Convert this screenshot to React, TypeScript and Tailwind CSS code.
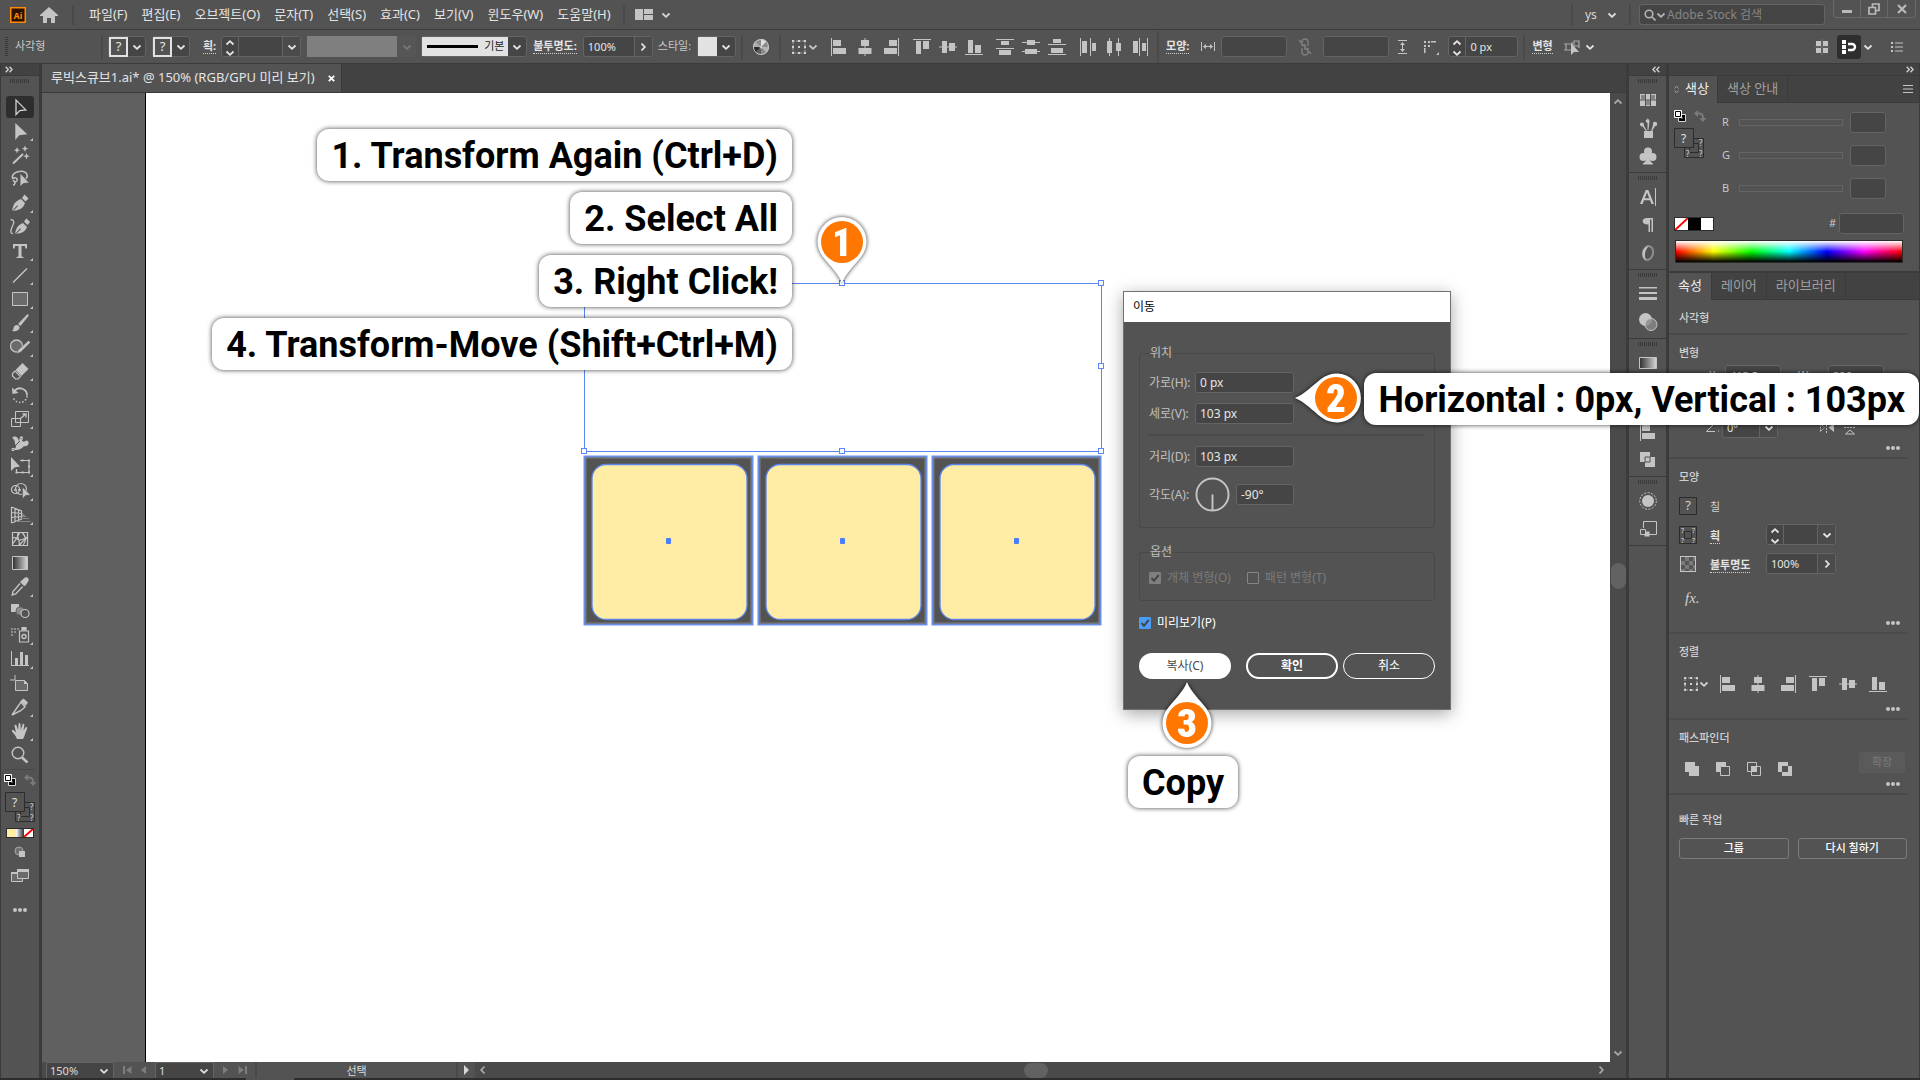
import type { ReactNode } from 'react'
import clsx from 'clsx'

const menus = ['파일(F)', '편집(E)', '오브젝트(O)', '문자(T)', '선택(S)', '효과(C)', '보기(V)', '윈도우(W)', '도움말(H)']

const field = 'h-[21px] min-w-0 rounded-[3px] border border-[#646464] bg-[#454545] text-[#e6e6e6] outline-none'

/* ---------- small glyphs ---------- */

function Chevron({ dir = 'down', className }: { dir?: 'down' | 'up' | 'left' | 'right'; className?: string }) {
  const d = {
    down: 'M1.5 3.5 5 6.8 8.5 3.5',
    up: 'M1.5 6.5 5 3.2 8.5 6.5',
    left: 'M6.5 1.5 3.2 5 6.5 8.5',
    right: 'M3.5 1.5 6.8 5 3.5 8.5',
  }[dir]
  return (
    <svg viewBox="0 0 10 10" className={clsx('size-[10px] shrink-0', className)} fill="none" stroke="currentColor" strokeWidth="1.8">
      <path d={d} />
    </svg>
  )
}

function DoubleChevron({ left }: { left?: boolean }) {
  return (
    <svg viewBox="0 0 8 7" className="h-[7px] w-2" fill="none" stroke="#cfcfcf" strokeWidth="1.4">
      {left ? <path d="M3.5.8.9 3.5l2.6 2.7M7.3.8 4.7 3.5l2.6 2.7" /> : <path d="M.7.8l2.6 2.7L.7 6.2M4.5.8l2.6 2.7-2.6 2.7" />}
    </svg>
  )
}

function Grip() {
  return (
    <div className="flex h-[10px] items-center justify-center">
      <div className="h-1 w-5 bg-[repeating-linear-gradient(to_right,#3a3a3a_0_1px,transparent_1px_2px)]" />
    </div>
  )
}

function Separator({ className }: { className?: string }) {
  return <div className={clsx('w-[2px] shrink-0 bg-[#494949]', className ?? 'h-6')} />
}

function Stepper() {
  return (
    <span className="flex h-full w-[17px] shrink-0 flex-col items-center justify-between border-r border-[#646464] py-px text-[#e6e6e6]">
      <button aria-label="증가" className="leading-none">
        <Chevron dir="up" className="size-[9px]" />
      </button>
      <button aria-label="감소" className="leading-none">
        <Chevron className="size-[9px]" />
      </button>
    </span>
  )
}

function Combo({ label, value = '', stepper, arrow, className }: { label: string; value?: string; stepper?: boolean; arrow?: 'down' | 'right'; className?: string }) {
  return (
    <div className={clsx(field, 'flex shrink-0 items-center', className)}>
      {stepper && <Stepper />}
      <input aria-label={label} defaultValue={value} className="h-full w-full min-w-0 bg-transparent px-1 text-[11px] outline-none" />
      {arrow && (
        <button aria-label={`${label} 옵션`} className="flex h-full w-[18px] shrink-0 items-center justify-center border-l border-[#646464] bg-[#4b4b4b]">
          <Chevron dir={arrow} />
        </button>
      )}
    </div>
  )
}

function SwatchButton({ label, className, children }: { label: string; className?: string; children?: ReactNode }) {
  return (
    <button aria-label={label} className={clsx(field, 'flex shrink-0 items-center', className)}>
      {children}
      <span className="flex w-[18px] items-center justify-center">
        <Chevron />
      </span>
    </button>
  )
}

function UnknownSwatch() {
  return (
    <span className="flex h-5 w-5 items-center justify-center border-2 border-[#e2e2e2] bg-[#535353] text-[13px] leading-none">?</span>
  )
}

/* ---------- align / distribute icons ---------- */

const alignIcons: Record<string, ReactNode> = {
  left: <path d="M1 1h1v18H1zM3 3h8v6H3zM3 11h13v6H3z" />,
  hcenter: <path d="M8.5 1h1v18h-1zM5 3h8v6H5zM2.5 11h13v6h-13z" />,
  right: <path d="M16 1h1v18h-1zM7 3h8v6H7zM2 11h13v6H2z" />,
  top: <path d="M0 2h18v1H0zM3 4h5v13H3zM10 4h6v8h-6z" />,
  vmiddle: <path d="M0 9.5h18v1H0zM3 4h5v12H3zM10 6h6v8h-6z" />,
  bottom: <path d="M0 17h18v1H0zM3 3h5v13H3zM10 8h6v8h-6z" />,
  dtop: <path d="M0 2h18v1H0zM5 4h8v4H5zM0 11h18v1H0zM3 13h12v5H3z" />,
  dvmid: <path d="M0 5h18v1H0zM5 3h8v5H5zM0 14h18v1H0zM3 12h12v5H3z" />,
  dbottom: <path d="M0 7h18v1H0zM5 2h8v4H5zM0 17h18v1H0zM3 11h12v5H3z" />,
  dleft: <path d="M1 1h1v18H1zM3 4h5v12H3zM11 1h1v18h-1zM13 6h4v8h-4z" />,
  dhmid: <path d="M4 1h1v18H4zM2 4h5v12H2zM13 1h1v18h-1zM11 6h5v8h-5z" />,
  dright: <path d="M8 1h1v18H8zM2 4h5v12H2zM16 1h1v18h-1zM11 6h4v8h-4z" />,
}

const alignGroups = [
  ['left', 'hcenter', 'right'],
  ['top', 'vmiddle', 'bottom'],
  ['dtop', 'dvmid', 'dbottom'],
  ['dleft', 'dhmid', 'dright'],
]

function AlignButton({ kind }: { kind: string }) {
  return (
    <button aria-label={kind} className="shrink-0">
      <svg viewBox="0 0 18 20" className="h-5 w-[18px] fill-[#c4c4c4]">
        {alignIcons[kind]}
      </svg>
    </button>
  )
}

function BoundsIcon() {
  return (
    <svg viewBox="0 0 16 16" className="size-4 shrink-0">
      <path d="M2 2h12v12H2z" fill="none" stroke="#a8a8a8" strokeDasharray="2 1" />
      <path d="M1 1h2v2H1zM7 1h2v2H7zM13 1h2v2h-2zM1 7h2v2H1zM7 7h2v2H7zM13 7h2v2h-2zM1 13h2v2H1zM7 13h2v2H7zM13 13h2v2h-2z" fill="#d0d0d0" />
    </svg>
  )
}

/* ---------- toolbar ---------- */

const spark = 'l.9 2.3 2.3.9-2.3.9-.9 2.3-.9-2.3-2.3-.9 2.3-.9z'

type Tool = { name: string; more?: boolean; icon: ReactNode }

const tools: Tool[] = [
  { name: '선택 도구', icon: <path d="M10 4v14.500l3.800-4 6-.6z" fill="none" stroke="#d0d0d0" strokeWidth="1.3" /> },
  { name: '직접 선택 도구', more: true, icon: <path d="M9.300 3v17l4-4.700 8-1z" /> },
  {
    name: '자동 선택 도구',
    icon: (
      <>
        <path d="M7 19.500 17 10" stroke="#c4c4c4" strokeWidth="2" />
        <path d={`M11 3${spark}M19 1.5${spark}M20.5 9${spark}`} />
      </>
    ),
  },
  {
    name: '올가미 도구',
    icon: (
      <>
        <path d="M7 11C3 4 19 0 21 6.500c.8 2.500-1 4-2 4.500M7 11c1-2 5-1.500 4 1.500-1 2-4 1-3.500-.5M9 14c0 2-.5 3-2 3" fill="none" stroke="#c4c4c4" strokeWidth="1.5" />
        <path d="M14 5v14l3.500-3.500 6-.5z" stroke="#535353" />
      </>
    ),
  },
  { name: '펜 도구', more: true, icon: <><path d="M6 19c1-6 3-10 9-12l4 4c-2 6-6 7-12 8l5-5-.8-.8z" /><path d="m16 6 2.500-3.500 4 4-3 3z" /></> },
  {
    name: '곡률 도구',
    icon: (
      <>
        <path d="M9 18c1-6 3-9 8-11l4 4c-2 5-5 6-11 7l5-5-.8-.8z" />
        <path d="m18 5.500 2.500-3 3.500 3.500-2.500 3z" />
        <path d="M4.500 4c3-1 4 2 2.500 5s-4 9 0 8.500" fill="none" stroke="#c4c4c4" strokeWidth="1.3" />
      </>
    ),
  },
  { name: '문자 도구', more: true, icon: <path d="M7 4h14v4.500h-1.500L18.800 6H15.500v10.500l2 .5v1h-7v-1l2-.5V6H9.200l-.7 2.500H7z" /> },
  { name: '선분 도구', more: true, icon: <path d="M7 18.500 21 4.500" stroke="#c4c4c4" strokeWidth="1.5" /> },
  { name: '사각형 도구', more: true, icon: <path d="M6.500 4.500h15v13h-15z" fill="#6b6b6b" stroke="#c4c4c4" /> },
  { name: '페인트브러쉬 도구', more: true, icon: <><path d="m12 12 9-9.500c1-.5 2 .5 1.500 1.500L14.500 14z" /><path d="M6 19c2-1 1-4 3-5.500 2-1.500 4.500 0 4.500 2C13.500 18.500 9 20 6 19z" /></> },
  { name: 'Shaper 도구', more: true, icon: <><circle cx="10.500" cy="10" r="6" fill="#6b6b6b" stroke="#c4c4c4" strokeWidth="1.3" /><path d="M10.500 18l1.500-4L22.500 4.500l2 2L15 16z" stroke="#535353" strokeWidth=".6" /></> },
  { name: '지우개 도구', more: true, icon: <><path d="m9.500 10 7-7 6 6-7 7z" /><path d="m9 11-2.500 2.500v2.500l3 3H12l2.500-2.500z" fill="none" stroke="#c4c4c4" strokeWidth="1.2" /></> },
  {
    name: '회전 도구',
    more: true,
    icon: (
      <>
        <path d="M8.500 7a7 7 0 0 1 12.500 4.500" fill="none" stroke="#c4c4c4" strokeWidth="1.8" />
        <path d="M21 12a7 7 0 0 1-13.500 2" fill="none" stroke="#c4c4c4" strokeWidth="1.5" strokeDasharray="1.5 1.8" />
        <path d="M6 3.500 12.500 9 6.500 10z" />
      </>
    ),
  },
  { name: '크기 조절 도구', more: true, icon: <><path d="M9.500 3.500h13v11h-13zM5.500 10.500h9v8h-9z" fill="none" stroke="#c4c4c4" /><path d="m14 11 5-4.500M16.500 6h3.500v3.500" fill="none" stroke="#c4c4c4" strokeWidth="1.3" /></> },
  { name: '폭 도구', more: true, icon: <><path d="M6 6c3-3 6-1 7 3l2-5 2 1-1 4c3 2 4-2 6 0 2 3-1 6-4 5-3 4-8 5-12 3 3 0 4-1 4-3C8 11 10 8 6 6z" /><path d="m5 18 9-9" stroke="#535353" /><path d="M6 16.500h2v2H6zM14 5.500h2v2h-2z" stroke="#c4c4c4" fill="#535353" /></> },
  { name: '자유 변형 도구', more: true, icon: <><path d="M5 1v14l3.500-3.500 5.500-1z" /><path d="M14 4.500h9v12H10.500V13" fill="none" stroke="#c4c4c4" strokeWidth="1.2" /><path d="M15.500 3.500h2v2h-2zM22 3.500h2v2h-2zM22 9.500h2v2h-2zM22 15.500h2v2h-2zM15.500 15.500h2v2h-2zM9.500 15.500h2v2h-2z" /></> },
  {
    name: '도형 구성 도구',
    more: true,
    icon: (
      <>
        <g fill="none" stroke="#c4c4c4" strokeWidth="1.2"><circle cx="9.500" cy="9.500" r="4" /><circle cx="15" cy="9" r="5.500" /><path d="M8 10h10" strokeDasharray="1 1" strokeWidth="1.6" /></g>
        <path d="M16.500 7v12l3-3.500 5-.5z" stroke="#535353" strokeWidth=".6" />
      </>
    ),
  },
  { name: '원근감 격자 도구', more: true, icon: <><path d="M5.500 3v16M5.500 3l10 4v8l-10 4M9 4.500v13M12.500 6v10.500M5.500 8.500l10 1M5.500 13.500l10-1" fill="none" stroke="#c4c4c4" strokeWidth="1.2" /><path d="m16 9 5 4h-5zM14 14h9v1h-9zM10 17h15v1H10z" fill="#858585" /></> },
  { name: '망 도구', icon: <path d="M6.500 4.500h15v13h-15zM6.500 10c5-2 4 3 8 2s4-2 7-2M12 4.500c-2 6 3 7 1 13M6.500 16c4-5 6-8 7-11.500M14 17.500c1-5 5-4 7.500-9M16 4.500c5 5 4 8 1 13" fill="none" stroke="#c4c4c4" strokeWidth="1.2" /> },
  { name: '그라디언트 도구', icon: <path d="M6.500 4.500h15v13h-15z" fill="url(#gray)" stroke="#c4c4c4" /> },
  { name: '스포이드 도구', more: true, icon: <><path d="m15 5 4-3.500c2-1 4.500 1 3.500 3.500L19.500 9.500l-1.500.5-4-4z" /><path d="m14 7.500-7 8-.8 3.500 3.500-1 7-7.500" fill="none" stroke="#c4c4c4" strokeWidth="1.4" /></> },
  { name: '블렌드 도구', icon: <><path d="M5 4h8v8H5z" /><circle cx="14" cy="11" r="4" fill="#8c8c8c" stroke="#6a6a6a" /><circle cx="19" cy="13.500" r="4" fill="#535353" stroke="#c4c4c4" strokeWidth="1.2" /></> },
  { name: '심볼 분무기 도구', more: true, icon: <><path d="M5 4h2v2H5zM8 4h2v2H8zM11 4h2v2h-2zM5 7h2v2H5zM8 7h2v2H8zM5 10h2v2H5z" fill="#8f8f8f" /><path d="M13.500 7h9v11h-9zM16 3.500h4V7h-4z" fill="none" stroke="#c4c4c4" strokeWidth="1.2" /><path d="M16 3h4v3.500h-4z" /><circle cx="18" cy="12.500" r="2" fill="none" stroke="#c4c4c4" strokeWidth="1.4" /></> },
  { name: '막대 그래프 도구', more: true, icon: <path d="M5 3h1v14h17v1H5zM9 10h3v7H9zM14 4h3v13h-3zM19 7h3v10h-3z" /> },
  { name: '대지 도구', icon: <><path d="M9.500 8.500h9l3 3v7h-12z" fill="#6b6b6b" stroke="#c4c4c4" /><path d="M18 8l4 4h-4zM4 7.500h5v1H4zM8.500 3h1v5h-1z" /></> },
  { name: '분할 영역 도구', more: true, icon: <><path d="M6 19 15 6l4 5-4 3.500z" fill="none" stroke="#c4c4c4" strokeWidth="1.4" /><path d="m14.500 5 3-2.500 4.500 4L19.500 10z" /></> },
  { name: '손 도구', more: true, icon: <path d="M11 19c-1-3-3-5-5-7.500-.5-1.300 1-1.800 2-1l2 2L8.500 6c-.2-1.400 1.500-1.700 2-.4l1.700 4.400L12.500 4c.1-1.400 1.900-1.400 2 0l.3 5.800L16.500 4.500c.4-1.300 2-1 1.800.4L17.500 10.500l2-3c.8-1.100 2.200-.3 1.700 1L19 14c-.5 2-1 3.500-2 5z" /> },
  { name: '돋보기 도구', icon: <><circle cx="12" cy="9" r="5.800" fill="none" stroke="#c4c4c4" strokeWidth="1.4" /><path d="m16 13.500 5.500 5" stroke="#c4c4c4" strokeWidth="2.4" /></> },
]

function SwapRow() {
  return (
    <div className="flex h-3 w-8 items-center justify-between">
      <button aria-label="초기값 칠과 선">
        <svg viewBox="0 0 12 12" className="size-3">
          <path d="M4.500 4.500h7v7h-7z" fill="#000" stroke="#d8d8d8" />
          <path d="M7 7h2v2H7z" fill="#555" />
          <path d="M.5.5h7v7h-7z" fill="#fff" stroke="#fff" />
          <path d="M1.500 1.500h5v5h-5z" fill="#fff" stroke="#000" />
        </svg>
      </button>
      <button aria-label="칠과 선 교체">
        <svg viewBox="0 0 12 12" className="size-3">
          <path d="M2 3.500h3c2.500 0 4 1.500 4 4V9" fill="none" stroke="#7b7b7b" strokeWidth="1.8" />
          <path d="M4 0v7L0 3.500zM5.500 8h7L9 12z" fill="#7b7b7b" />
        </svg>
      </button>
    </div>
  )
}

function FillStroke() {
  return (
    <svg viewBox="0 0 30 30" className="size-[30px]">
      <path d="M10.500 10.500h19v19h-19z" fill="#535353" stroke="#2c2c2c" />
      <path d="M15.500 15.500h9v9h-9z" fill="#535353" stroke="#2c2c2c" />
      <g fill="#d8d8d8" fontSize="8"><text x="25" y="18">?</text><text x="12" y="29">?</text><text x="25" y="29">?</text></g>
      <path d="M.5.5h19v19H.5z" fill="#535353" stroke="#2c2c2c" />
      <text x="7" y="14.500" fill="#e0e0e0" fontSize="12">?</text>
    </svg>
  )
}

function Dots({ className }: { className?: string }) {
  return (
    <button aria-label="기타 옵션" className={clsx('flex h-4 items-center gap-px', className)}>
      <i className="size-1 rounded-full bg-[#c4c4c4]" />
      <i className="size-1 rounded-full bg-[#c4c4c4]" />
      <i className="size-1 rounded-full bg-[#c4c4c4]" />
    </button>
  )
}

function Toolbar() {
  return (
    <aside className="flex w-[42px] shrink-0 flex-col border-r-3 border-l border-[#3b3b3b] bg-[#535353]">
      <div className="flex h-3 shrink-0 items-center border-b border-[#3b3b3b] bg-[#424242] px-1">
        <DoubleChevron />
      </div>
      <Grip />
      <div className="mt-[10px] flex flex-col items-center gap-[2px]">
        {tools.map((t, i) => (
          <button key={t.name} aria-label={t.name} className={clsx('h-[22px] w-7 shrink-0 rounded-[3px]', i === 0 && 'bg-[#2e2e2e]')}>
            <svg viewBox="0 0 28 22" className="h-[22px] w-7 fill-[#c4c4c4]">
              {t.icon}
              {t.more && <path d="M27 18v3h-3z" />}
            </svg>
          </button>
        ))}
      </div>
      <div className="mx-1 mt-[3px] h-px bg-[#484848]" />
      <div className="flex flex-col items-center pt-1">
        <SwapRow />
        <div className="mt-[6px]">
          <FillStroke />
        </div>
        <div className="mt-[6px] flex h-[10px] w-7 border border-[#2c2c2c]">
          <span className="flex-1 bg-[#ffeca5]" />
          <span className="flex-1 bg-linear-to-r from-white to-[#333]" />
          <svg viewBox="0 0 9 8" className="h-2 w-[9px] bg-white" stroke="#f00" strokeWidth="2"><path d="M0 8 9 0" /></svg>
        </div>
        <button aria-label="그리기 모드" className="mt-2">
          <svg viewBox="0 0 12 12" className="size-3">
            <circle cx="5" cy="5" r="4" fill="#707070" stroke="#a5a5a5" />
            <path d="M5 5h6v6H5z" fill="#c4c4c4" />
          </svg>
        </button>
        <button aria-label="화면 모드" className="mt-[11px]">
          <svg viewBox="0 0 18 13" className="h-[13px] w-[18px]">
            <path d="M.5 3.500h11v9H.5z" fill="#6b6b6b" stroke="#c4c4c4" />
            <path d="M6.500.5h11v9h-11z" fill="#6b6b6b" stroke="#c4c4c4" />
            <path d="M6 0h12v3H6zM0 3h6v2H0z" fill="#c4c4c4" />
          </svg>
        </button>
        <Dots className="mt-5" />
      </div>
    </aside>
  )
}

/* ---------- top bars ---------- */

function MenuBar() {
  return (
    <header className="flex h-[30px] shrink-0 items-center border-b border-[#3b3b3b] pl-[10px] text-[13px]">
      <svg viewBox="0 0 16 16" className="size-4 shrink-0">
        <path d="M.75.75h14.500v14.500H.75z" fill="#2b0f00" stroke="#ff8a00" strokeWidth="1.5" />
        <text x="8" y="11.500" textAnchor="middle" fontSize="9" fontWeight="700" fill="#ff8a00">Ai</text>
      </svg>
      <svg viewBox="0 0 18 16" className="ml-[14px] h-4 w-[18px] shrink-0 fill-[#c4c4c4]">
        <path d="M9 0 0 8v1h3v7h4v-5h4v5h4V9h3V8z" />
      </svg>
      <Separator className="ml-[14px] h-5" />
      <nav className="ml-[15px] flex gap-[14px] whitespace-nowrap text-[#e4e4e4]">
        {menus.map((m) => (
          <button key={m}>{m}</button>
        ))}
      </nav>
      <Separator className="ml-3 h-5" />
      <button aria-label="문서 정돈" className="ml-[10px] flex items-center gap-2 text-[#d8d8d8]">
        <svg viewBox="0 0 18 11" className="h-[11px] w-[18px] fill-[#c4c4c4]">
          <path d="M0 0h8v11H0zM9 0h9v5H9zM9 6h9v5H9z" />
        </svg>
        <Chevron />
      </button>
      <div className="ml-auto flex h-full shrink-0 items-center">
        <Separator className="h-5" />
        <div className="relative ml-3 flex items-center">
          <select aria-label="작업 영역" className="w-8 appearance-none bg-transparent text-[12px] text-[#d8d8d8] outline-none">
            <option>ys</option>
          </select>
          <Chevron className="pointer-events-none absolute right-0 text-[#e0e0e0]" />
        </div>
        <Separator className="ml-3 h-5" />
        <label className={clsx(field, 'ml-2 flex w-[186px] items-center pl-1')}>
          <svg viewBox="0 0 12 12" className="size-3 shrink-0" fill="none" stroke="#b5b5b5" strokeWidth="1.6">
            <circle cx="5" cy="5" r="3.800" />
            <path d="m8 8 3.500 3.500" />
          </svg>
          <Chevron className="size-2 text-[#b5b5b5]" />
          <input aria-label="Adobe Stock 검색" placeholder="Adobe Stock 검색" className="ml-px min-w-0 flex-1 bg-transparent text-[12px] outline-none placeholder:text-[#858585]" />
        </label>
        <div className="mr-1 ml-2 flex h-[18px] self-start rounded-b-[3px] border border-t-0 border-[#686868] text-[#bababa]">
          <button aria-label="최소화" className="flex w-[27px] items-center justify-center border-r border-[#686868]">
            <svg viewBox="0 0 12 12" className="size-3"><path d="M1 7h10v3H1z" fill="currentColor" /></svg>
          </button>
          <button aria-label="이전 크기로" className="flex w-[27px] items-center justify-center border-r border-[#686868]">
            <svg viewBox="0 0 12 12" className="size-3" fill="none" stroke="currentColor" strokeWidth="1.7"><path d="M4.500 1h6.500v6.500H4.500z" /><path d="M1 4.500h6.500V11H1z" fill="#535353" /></svg>
          </button>
          <button aria-label="닫기" className="flex w-[27px] items-center justify-center">
            <svg viewBox="0 0 12 12" className="size-3" stroke="currentColor" strokeWidth="2.2"><path d="m2 2 8 8M10 2l-8 8" /></svg>
          </button>
        </div>
      </div>
    </header>
  )
}

function BarLabel({ children, className }: { children: ReactNode; className?: string }) {
  return (
    <span className={clsx('shrink-0 border-b border-dotted border-[#d0d0d0] text-[11px] leading-[14px] font-bold text-[#e4e4e4]', className)}>
      {children}
    </span>
  )
}

function ControlBar() {
  return (
    <div className="flex h-[34px] shrink-0 items-center border-b border-[#3b3b3b] pl-[5px] text-[11px] whitespace-nowrap text-[#c8c8c8]">
      <div className="h-5 w-[3px] bg-[repeating-linear-gradient(to_bottom,#3a3a3a_0_1px,transparent_1px_2px)]" />
      <span className="ml-[7px] w-[86px]">사각형</span>
      <Separator />
      <SwatchButton label="칠" className="ml-[5px] w-[38px]">
        <UnknownSwatch />
      </SwatchButton>
      <SwatchButton label="획 색상" className="ml-[6px] w-[38px]">
        <UnknownSwatch />
      </SwatchButton>
      <BarLabel className="ml-[13px]">획:</BarLabel>
      <Combo label="획 두께" stepper arrow="down" className="ml-[5px] w-[80px]" />
      <div className="ml-[6px] flex h-[21px] shrink-0 items-center text-[#787878]">
        <span className="h-full w-[90px] bg-[#7f7f7f]" />
        <span className="flex h-full w-[19px] items-center justify-center bg-[#565656]">
          <Chevron />
        </span>
      </div>
      <SwatchButton label="브러쉬 정의" className="ml-[5px] w-[106px]">
        <span className="flex h-full flex-1 items-center gap-[6px] bg-[#e2e2e2] pl-[5px] text-[#222]">
          <span className="h-[3px] w-[51px] bg-black" />
          기본
        </span>
      </SwatchButton>
      <BarLabel className="ml-[6px]">불투명도:</BarLabel>
      <Combo label="불투명도" value="100%" arrow="right" className="ml-[6px] w-[70px]" />
      <span className="ml-[5px] shrink-0">스타일:</span>
      <SwatchButton label="그래픽 스타일" className="ml-[6px] w-[39px]">
        <span className="h-full flex-1 bg-[#e2e2e2]" />
      </SwatchButton>
      <Separator className="ml-[5px] h-6" />
      <button aria-label="색상 변경" className="ml-[9px] shrink-0">
        <svg viewBox="0 0 18 18" className="size-[18px]">
          <circle cx="9" cy="9" r="8" fill="#8a8a8a" />
          <path d="M9 9V1a8 8 0 0 1 5.700 2.300z" fill="#e0e0e0" />
          <path d="M9 9h8a8 8 0 0 1-2.300 5.700z" fill="#b5b5b5" />
          <path d="M9 9v8a8 8 0 0 1-5.700-2.300z" fill="#5f5f5f" />
          <path d="M9 9H1a8 8 0 0 0 2.300 5.700z" fill="#2c2c2c" />
          <path d="M9 9H1a8 8 0 0 1 2.300-5.700z" fill="#aaa" />
          <circle cx="9" cy="9" r="7.500" fill="none" stroke="#c4c4c4" />
          <circle cx="9" cy="9" r="1.500" fill="#c4c4c4" />
        </svg>
      </button>
      <Separator className="ml-[9px] h-6" />
      <button aria-label="정렬 대상" className="ml-[10px] flex shrink-0 items-center">
        <BoundsIcon />
        <Chevron className="ml-px size-2" />
      </button>
      <div className="ml-3 flex gap-[13px]">
        {alignGroups.map((group) => (
          <div key={group[0]} className="flex gap-2">
            {group.map((k) => (
              <AlignButton key={k} kind={k} />
            ))}
          </div>
        ))}
      </div>
      <Separator className="ml-2 h-8" />
      <BarLabel className="ml-[7px]">모양:</BarLabel>
      <svg viewBox="0 0 14 9" className="ml-3 h-[9px] w-[14px] shrink-0 fill-[#c4c4c4]">
        <path d="M0 0h1v9H0zM13 0h1v9h-1zM2 4.500 5 2v2h4V2l3 2.500L9 7V5H5v2z" />
      </svg>
      <input aria-label="폭" className={clsx(field, 'ml-[6px] w-[66px] shrink-0 px-1')} />
      <svg viewBox="0 0 16 18" className="ml-[10px] h-[18px] w-4 shrink-0" fill="none" stroke="#7e7e7e" strokeWidth="1.4">
        <path d="M5 8V4a3 3 0 0 1 6 0v4M5 10v4a3 3 0 0 0 6 0v-4M8 6v6M2 2l12 14" />
      </svg>
      <input aria-label="높이" className={clsx(field, 'ml-[10px] w-[66px] shrink-0 px-1')} />
      <svg viewBox="0 0 9 14" className="ml-[9px] h-[14px] w-[9px] shrink-0 fill-[#c4c4c4]">
        <path d="M0 0h9v1H0zM0 13h9v1H0zM4.500 2 7 5H5v4h2L4.500 12 2 9h2V5H2z" />
      </svg>
      <svg viewBox="0 0 16 16" className="ml-4 size-4 shrink-0 fill-[#c4c4c4]">
        <path d="M1 2h2v2H1zM5 2h2v2H5zM8 2h5v1.500H8zM1 6h2v2H1zM5 6h2v2H5zM1 9h1.500v5H1zM16 13v3h-3z" />
      </svg>
      <Combo label="모퉁이 반경" value="0 px" stepper className="ml-[9px] w-[70px]" />
      <Separator className="ml-[5px] h-6" />
      <BarLabel className="ml-[7px]">변형</BarLabel>
      <button aria-label="변형 옵션" className="ml-[10px] flex shrink-0 items-center">
        <svg viewBox="0 0 18 18" className="size-[18px]">
          <path d="M3 6h6v6H3zM11 3h5v5h-5zM1 6h2M1 12h2M9 4v2M16 8v2" fill="none" stroke="#a8a8a8" strokeWidth="1.2" />
          <path d="M8 5v12l3-3h5z" fill="#c4c4c4" />
        </svg>
        <Chevron className="ml-1 text-[#e6e6e6]" />
      </button>
      <div className="mr-[17px] ml-auto flex shrink-0 items-center">
        <button aria-label="픽셀에 맞춤">
          <svg viewBox="0 0 14 16" className="h-4 w-[14px] fill-[#c4c4c4]">
            <path d="M1 2h5v5H1zM8 2h5v5H8zM1 9h5v5H1zM8 9h5v5H8z" />
            <path d="M6.700 0h.6v16h-.6zM0 7.700h14v.6H0z" fill="#888" />
          </svg>
        </button>
        <button aria-label="스냅" className="ml-2 flex h-6 w-6 items-center justify-center rounded-[3px] bg-[#2e2e2e]">
          <svg viewBox="0 0 16 16" className="size-4">
            <path d="M1 1h4v4H1zM1 6h4v4H1zM1 11h4v4H1z" fill="#fff" />
            <path d="M7 5h4a3 3 0 0 1 0 6H7" fill="none" stroke="#fff" strokeWidth="2.4" />
          </svg>
        </button>
        <Chevron className="ml-[2px] text-[#e6e6e6]" />
        <svg viewBox="0 0 12 10" className="ml-[18px] h-[10px] w-3 fill-[#c4c4c4]">
          <path d="M0 0h2v2H0zM4 .5h8v1H4zM0 4h2v2H0zM4 4.500h8v1H4zM0 8h2v2H0zM4 8.500h8v1H4z" />
        </svg>
      </div>
    </div>
  )
}

/* ---------- document ---------- */

function Artwork() {
  const handles = [
    [584, 283], [842, 283], [1101, 283],
    [584, 366], [1101, 366],
    [584, 451], [842, 451], [1101, 451],
  ]
  return (
    <svg viewBox="578 277 530 354" className="absolute top-[184px] left-[432px] h-[354px] w-[530px]">
      {[584, 758, 932].map((x) => (
        <g key={x}>
          <rect x={x + 0.5} y="456.500" width="168" height="168" fill="#535353" stroke="#6c8fe6" strokeWidth="2" />
          <rect x={x + 2} y="458" width="165" height="165" fill="none" stroke="#808080" />
          <rect x={x + 8} y="464.500" width="155" height="155" rx="14" fill="#ffeca5" stroke="#5c84ec" strokeWidth="1.3" />
          <rect x={x + 82} y="538" width="5" height="6" rx="1" fill="#4a7dff" />
        </g>
      ))}
      <path d="M584.500 283.500h517v168h-517z" fill="none" stroke="#5b87f5" />
      {handles.map(([x, y]) => (
        <rect key={`${x}-${y}`} x={x - 2.5} y={y - 2.5} width="5" height="5" fill="#fff" stroke="#5b87f5" />
      ))}
    </svg>
  )
}

function StatusBar() {
  return (
    <footer className="flex h-4 shrink-0 items-center bg-[#4a4a4a] pl-1 text-[11px] text-[#dcdcdc]">
      <div className="relative flex h-full w-[68px] items-center border border-b-0 border-[#646464] bg-[#454545]">
        <select aria-label="확대/축소" className="w-full appearance-none bg-transparent pl-[3px] leading-none outline-none">
          <option>150%</option>
        </select>
        <Chevron className="pointer-events-none absolute right-1" />
      </div>
      <div className="flex h-full items-center bg-[#535353]">
        <div className="flex w-[41px] items-center justify-center gap-[9px]">
          <svg viewBox="0 0 9 8" className="h-2 w-[9px] fill-[#7d7d7d]"><path d="M0 0h2v8H0zM8.500 0v8L3 4z" /></svg>
          <svg viewBox="0 0 5 8" className="h-2 w-[5px] fill-[#7d7d7d]"><path d="M5 0v8L0 4z" /></svg>
        </div>
        <div className="relative flex h-full w-[59px] items-center border border-b-0 border-[#646464] bg-[#454545]">
          <select aria-label="대지" className="w-full appearance-none bg-transparent pl-[3px] leading-none outline-none">
            <option>1</option>
          </select>
          <Chevron className="pointer-events-none absolute right-1" />
        </div>
        <div className="flex w-[41px] items-center justify-center gap-[10px]">
          <svg viewBox="0 0 5 8" className="h-2 w-[5px] fill-[#7d7d7d]"><path d="M0 0v8l5-4z" /></svg>
          <svg viewBox="0 0 9 8" className="h-2 w-[9px] fill-[#7d7d7d]"><path d="M7 0h2v8H7zM.5 0v8L6 4z" /></svg>
        </div>
        <span className="h-full w-[2px] bg-[#494949]" />
        <span className="w-[199px] text-center leading-none">선택</span>
        <span className="h-full w-[2px] bg-[#494949]" />
        <svg viewBox="0 0 5 10" className="mx-[6px] h-[10px] w-[5px] fill-[#d8d8d8]"><path d="M0 0v10l5-5z" /></svg>
      </div>
      <div className="flex flex-1 items-center justify-between pr-1 pl-[3px] text-[#a8a8a8]">
        <Chevron dir="left" />
        <span className="mr-3 h-[15px] w-6 rounded-full bg-[#626262]" />
        <Chevron dir="right" />
      </div>
      <div className="w-4" />
    </footer>
  )
}

function DocumentArea() {
  return (
    <main className="flex min-w-0 flex-1 flex-col">
      <div className="flex h-[29px] shrink-0 border-b border-[#3b3b3b] bg-[#424242]">
        <div className="flex w-[300px] items-center justify-between border-r border-[#3b3b3b] bg-[#535353] pr-[6px] pl-[9px] text-[13px] text-[#e4e4e4]">
          <span className="whitespace-nowrap">루빅스큐브1.ai* @ 150% (RGB/GPU 미리 보기)</span>
          <button aria-label="문서 닫기">
            <svg viewBox="0 0 7 7" className="size-[7px]" stroke="#fff" strokeWidth="1.8"><path d="m.8.8 5.400 5.400M6.200.8.8 6.200" /></svg>
          </button>
        </div>
      </div>
      <div className="flex min-h-0 flex-1">
        <div className="w-[104px] shrink-0 border-r border-black bg-[#606060]" />
        <div className="relative min-w-0 flex-1 bg-white">
          <Artwork />
        </div>
        <div className="flex w-4 shrink-0 flex-col items-center justify-between bg-[#4a4a4a] py-1 text-[#a8a8a8]">
          <Chevron dir="up" />
          <span className="mb-1 h-[26px] w-[15px] rounded-full bg-[#626262]" />
          <Chevron />
        </div>
      </div>
      <StatusBar />
    </main>
  )
}

/* ---------- docked icon strip ---------- */

const iconGroups: ReactNode[][] = [
  [
    <><path d="M3 5h16v12H3z" /><path d="M4 6h4v4.500H4zM14 6h4v4.500h-4zM9 11.500h4V16H9z" fill="#858585" /><path d="M3 11h16M8.500 5v12M13.500 5v12" stroke="#535353" fill="none" /></>,
    <><path d="M7 14h9v7H7zM10.500 1l2 3-1 9h-1zM17 5l3 1-5 8h-1zM3 6l3 1 4 7H9z" /><circle cx="10.500" cy="4" r="1.800" /><circle cx="18" cy="7" r="2.200" /><circle cx="5" cy="7.500" r="2" /></>,
    <><circle cx="11" cy="6.500" r="4" /><circle cx="6.500" cy="12" r="4" /><circle cx="15.500" cy="12" r="4" /><path d="M10 10h2c0 4 .5 6 4 8.500v1H6v-1C9.500 16 10 14 10 10z" /></>,
  ],
  [
    <><path d="M3 18 8.700 4h2.600L17 18h-2.600l-1.400-3.700H7L5.600 18zM7.800 12.200h4.400L10 6.400z" /><path d="M18 2h1v18h-1z" /></>,
    <path d="M16 4v14h-1.500V5.500H13V18h-1.500v-7.500C4 11 4 4 10 4z" />,
    <><ellipse cx="11" cy="11" rx="5" ry="7" fill="none" stroke="#8d8d8d" strokeWidth="2" transform="rotate(12 11 11)" /><path d="M12 4C5 5 3 15 9.500 18.500 6.500 14 8 7 12 4z" /></>,
  ],
  [
    <path d="M2 4h18v1.500H2zM2 9h18v2H2zM2 14h18v3H2z" />,
    <><circle cx="8.500" cy="8.500" r="6.500" /><circle cx="14" cy="13.500" r="6" fill="#8a8a8a" fillOpacity=".8" stroke="#c4c4c4" /></>,
  ],
  [<path d="M2.500 5.500h17v11h-17z" fill="url(#gray)" stroke="#c4c4c4" />],
  [
    <path d="M4 4h14v14H4z" fill="none" stroke="#c4c4c4" />,
    <path d="M3 2h1v18H3zM5 4h8v6H5zM5 12h13v6H5z" />,
    <><path d="M3 3h10v10H3zM8 8h10v10H8z" /><path d="M8 8h5v5H8z" stroke="#535353" /></>,
  ],
  [
    <><circle cx="11" cy="11" r="6" /><circle cx="11" cy="11" r="8.300" fill="none" stroke="#c4c4c4" strokeDasharray="2 1.5" /></>,
    <><path d="M6.500 3.500h13v13H11M6.500 3.500V10" fill="none" stroke="#c4c4c4" /><path d="M7.500 13.500h5v5h-5z" /><path d="M3.500 11.500h5v5h-5z" fill="#535353" stroke="#c4c4c4" /></>,
  ],
]

function IconStrip() {
  return (
    <aside className="flex w-[40px] shrink-0 flex-col border-l-3 border-[#3b3b3b]">
      <div className="flex h-3 shrink-0 items-center justify-end border-b border-[#3b3b3b] bg-[#424242] pr-[6px]">
        <DoubleChevron left />
      </div>
      {iconGroups.map((group, i) => (
        <div key={i} className="border-b border-[#3b3b3b] pb-[2px]">
          <Grip />
          {group.map((icon, j) => (
            <button key={j} aria-label={`패널 ${i + 1}-${j + 1}`} className="flex h-7 w-full items-center justify-center">
              <svg viewBox="0 0 22 22" className="size-[22px] fill-[#c4c4c4]">
                {icon}
              </svg>
            </button>
          ))}
        </div>
      ))}
    </aside>
  )
}

/* ---------- panels ---------- */

function Tabs({ items, children }: { items: string[]; children?: ReactNode }) {
  return (
    <div role="tablist" className="flex h-[27px] text-[13px] text-[#a0a0a0]">
      {items.map((t, i) => (
        <button
          key={t}
          role="tab"
          aria-selected={i === 0}
          className={clsx(
            'flex items-center gap-[6px] border-r border-[#3b3b3b] pb-px',
            children && i === 0 ? 'pr-2 pl-[5px]' : 'px-[9px]',
            i === 0 ? 'bg-[#535353] text-[#f0f0f0]' : 'border-b bg-[#424242]',
          )}
        >
          {children && i === 0 && (
            <svg viewBox="0 0 5 9" className="h-[9px] w-[5px]" fill="none" stroke="#a0a0a0"><path d="M.5 3.500 2.500 1l2 2.500M.5 5.500 2.500 8l2-2.500" /></svg>
          )}
          {t}
        </button>
      ))}
      <div className="flex flex-1 items-center justify-end border-b border-[#3b3b3b] bg-[#424242] pr-[6px]">{children}</div>
    </div>
  )
}

function ColorPanel() {
  return (
    <section className="border-b-2 border-[#3b3b3b] text-[11px] text-[#c8c8c8]">
      <Tabs items={['색상', '색상 안내']}>
        <svg viewBox="0 0 10 8" className="h-2 w-[10px] fill-[#c4c4c4]">
          <path d="M0 0h10v1H0zM0 3.500h10v1H0zM0 7h10v1H0z" />
        </svg>
      </Tabs>
      <div className="flex px-[5px] pt-[3px]">
        <div className="w-12 shrink-0 pt-1">
          <SwapRow />
          <div className="mt-[6px]">
            <FillStroke />
          </div>
        </div>
        <div className="min-w-0 flex-1 pr-7">
          {['R', 'G', 'B'].map((c) => (
            <div key={c} className="flex h-[33px] items-center">
              <label htmlFor={`ch-${c}`} className="w-[17px] shrink-0">
                {c}
              </label>
              <input
                type="range"
                aria-label={`${c} 슬라이더`}
                disabled
                className="h-[7px] min-w-0 flex-1 appearance-none border border-[#646464] bg-transparent [&::-webkit-slider-thumb]:w-0 [&::-webkit-slider-thumb]:appearance-none"
              />
              <input id={`ch-${c}`} className={clsx(field, 'ml-[7px] w-9 shrink-0')} />
            </div>
          ))}
        </div>
      </div>
      <div className="mt-2 flex items-center pr-[15px] pl-[5px]">
        <div className="flex h-[14px] w-10 border border-[#2c2c2c]">
          <svg viewBox="0 0 13 12" className="h-3 w-[13px] bg-white" stroke="#f00" strokeWidth="2"><path d="M0 12 13 0" /></svg>
          <span className="flex-1 bg-black" />
          <span className="flex-1 bg-white" />
        </div>
        <label className="ml-auto flex items-center gap-[3px]">
          #
          <input aria-label="16진수" className={clsx(field, 'w-[65px]')} />
        </label>
      </div>
      <div className="mt-[6px] mr-4 mb-2 ml-[6px] h-[23px] border border-[#2c2c2c] bg-[linear-gradient(to_bottom,white,transparent_50%,black),linear-gradient(to_right,red,yellow,lime,cyan,blue,magenta,red)]" />
    </section>
  )
}

function Section({ title, className, children }: { title: string; className?: string; children?: ReactNode }) {
  return (
    <section className={clsx('mr-3 border-b-2 border-[#4a4a4a] pt-[10px] pl-[10px]', className)}>
      <h3 className="leading-4 font-medium">{title}</h3>
      {children}
    </section>
  )
}

const pathfinders: ReactNode[] = [
  <path d="M0 0h10v4h4v10H4v-4H0z" />,
  <><path d="M0 0h10v4H4v6H0z" /><path d="M4.500 4.500h9v9h-9z" fill="none" stroke="#c4c4c4" /></>,
  <><path d="M.5.5h9v9h-9zM4.500 4.500h9v9h-9z" fill="none" stroke="#c4c4c4" /><path d="M4 4h6v6H4z" /></>,
  <path d="M0 0h10v4h4v10H4v-4H0zM4 4v6h6V4z" fillRule="evenodd" />,
]

function PropertiesPanel() {
  return (
    <section className="text-[11px] text-[#d0d0d0]">
      <Tabs items={['속성', '레이어', '라이브러리']} />
      <Section title="사각형" className="pb-[7px]" />
      <Section title="변형">
        <div className="mt-1 flex flex-col gap-[31px] pr-[23px]">
          <div className="flex items-center">
            <label htmlFor="pos-x" className="ml-[30px] w-4">X:</label>
            <input id="pos-x" defaultValue="413.5 px" className={clsx(field, 'w-[56px] px-1')} />
            <label htmlFor="size-w" className="ml-auto w-[30px]">W:</label>
            <input id="size-w" defaultValue="396 px" className={clsx(field, 'w-[56px] px-1')} />
          </div>
          <div className="flex items-center pl-[26px]">
            <svg viewBox="0 0 14 10" className="h-[10px] w-[14px]" fill="none" stroke="#c4c4c4"><path d="M9 1 1.500 8.500H10M13 8h1" /></svg>
            <Combo label="각도" value="0°" arrow="down" className="ml-[3px] w-[56px]" />
            <svg viewBox="0 0 14 11" className="ml-[42px] h-[11px] w-[14px] fill-[#c4c4c4]"><path d="M14 1v9L8.500 5.500z" /><path d="M.5 1.500v8l4-4zM6.500 0v11" fill="none" stroke="#c4c4c4" strokeDasharray="2 1" /></svg>
            <svg viewBox="0 0 12 14" className="ml-[10px] h-[14px] w-3" fill="none" stroke="#c4c4c4"><path d="M2 0h8L6 4zM0 6.500h12" strokeDasharray="2 1" /><path d="M1.500 13h9L6 9z" /></svg>
          </div>
        </div>
        <Dots className="mt-[2px] mr-[7px] mb-px ml-auto" />
      </Section>
      <Section title="모양">
        <div className="mt-[6px]">
          <div className="flex h-[29px] items-center gap-[13px]">
            <span className="flex size-[18px] items-center justify-center border border-[#2c2c2c] text-[13px]">?</span>
            <span className="mt-1">칠</span>
          </div>
          <div className="flex h-[29px] items-center">
            <svg viewBox="0 0 18 18" className="size-[18px]" fill="none" stroke="#2c2c2c">
              <path d="M.5.5h17v17H.5zM5.500 5.500h7v7h-7z" />
              <g fill="#d8d8d8" stroke="none" fontSize="7"><text x="2" y="7">?</text><text x="13" y="7">?</text><text x="2" y="17">?</text><text x="13" y="17">?</text></g>
            </svg>
            <BarLabel className="mt-1 ml-[13px]">획</BarLabel>
            <Combo label="획 두께" stepper arrow="down" className="mr-[71px] ml-auto w-[70px]" />
          </div>
          <div className="flex h-[29px] items-center">
            <span className="ml-px size-4 border border-[#c4c4c4] bg-[repeating-conic-gradient(#7a7a7a_0_25%,#555_0_50%)] bg-size-[8px_8px]" />
            <BarLabel className="mt-1 ml-[14px]">불투명도</BarLabel>
            <Combo label="불투명도" value="100%" arrow="right" className="mr-[71px] ml-auto w-[70px]" />
          </div>
        </div>
        <div className="mt-1 flex h-[33px] items-center pl-[6px]">
          <button className="font-['Liberation_Serif',serif] text-[15px] italic">fx.</button>
        </div>
        <Dots className="mr-[7px] mb-px ml-auto" />
      </Section>
      <Section title="정렬">
        <div className="mt-[14px] flex h-5 items-center pl-1">
          <button aria-label="정렬 대상" className="mr-[10px] flex items-center">
            <BoundsIcon />
            <Chevron className="size-2" />
          </button>
          <div className="flex gap-3">
            {['left', 'hcenter', 'right', 'top', 'vmiddle', 'bottom'].map((k) => (
              <AlignButton key={k} kind={k} />
            ))}
          </div>
        </div>
        <Dots className="mt-[7px] mr-[7px] mb-px ml-auto" />
      </Section>
      <Section title="패스파인더">
        <div className="mt-[6px] flex items-start gap-[17px] pl-[6px]">
          {pathfinders.map((p, i) => (
            <button key={i} aria-label={`패스파인더 ${i + 1}`} className="pt-[10px]">
              <svg viewBox="0 0 14 14" className="size-[14px] fill-[#c4c4c4]">
                {p}
              </svg>
            </button>
          ))}
          <button disabled className="mr-[2px] ml-auto h-[21px] w-[46px] rounded-[2px] bg-[#5a5a5a] text-[#7b7b7b]">
            확장
          </button>
        </div>
        <Dots className="mr-[7px] mb-px ml-auto" />
      </Section>
      <section className="pt-[17px] pr-3 pl-[10px]">
        <h3 className="leading-4 font-medium">빠른 작업</h3>
        <div className="mt-[10px] flex gap-[9px] font-medium text-white">
          <button className="h-[21px] flex-1 rounded-[3px] border border-[#7a7a7a]">그룹</button>
          <button className="h-[21px] flex-1 rounded-[3px] border border-[#7a7a7a]">다시 칠하기</button>
        </div>
      </section>
    </section>
  )
}

function PanelDock() {
  return (
    <aside className="w-[254px] shrink-0 border-r border-l-3 border-[#3b3b3b]">
      <div className="flex h-3 items-center justify-end border-b border-[#3b3b3b] bg-[#424242] pr-[5px]">
        <DoubleChevron />
      </div>
      <ColorPanel />
      <PropertiesPanel />
    </aside>
  )
}

/* ---------- move dialog ---------- */

function MoveField({ id, label, value }: { id: string; label: string; value: string }) {
  return (
    <div className="flex items-center">
      <label htmlFor={id} className="w-[46px] whitespace-nowrap">
        {label}
      </label>
      <input id={id} defaultValue={value} className={clsx(field, 'w-[99px] px-1')} />
    </div>
  )
}

function Checkbox({ label, checked, disabled }: { label: string; checked?: boolean; disabled?: boolean }) {
  return (
    <label className={clsx('relative flex items-center gap-[6px] whitespace-nowrap', disabled ? 'text-[#7a7a7a]' : 'text-white')}>
      <input
        type="checkbox"
        defaultChecked={checked}
        disabled={disabled}
        className="peer size-3 appearance-none rounded-[1px] border border-[#858585] checked:border-[#4a9cf5] checked:bg-[#4a9cf5] disabled:checked:border-[#7f7f7f] disabled:checked:bg-[#7f7f7f]"
      />
      <svg viewBox="0 0 12 12" className="pointer-events-none absolute left-0 hidden size-3 peer-checked:block" fill="none" stroke="#454545" strokeWidth="2">
        <path d="m2.500 6 2.500 2.800L9.700 3" />
      </svg>
      {label}
    </label>
  )
}

function MoveDialog() {
  const group = 'rounded-[3px] border border-[#484848] px-[9px]'
  const pill = 'h-[26px] w-[92px] rounded-full'
  return (
    <div role="dialog" aria-label="이동" className="absolute top-[291px] left-[1123px] w-[328px] border border-[#707070] bg-[#535353] text-[12px] leading-4 text-[#c0c0c0] shadow-[0_4px_16px_rgba(0,0,0,0.35)]">
      <div className="flex h-[30px] items-center bg-white pl-[9px] text-black">이동</div>
      <div className="px-[15px] pt-[23px] pb-[30px]">
        <fieldset className={group}>
          <legend className="px-px">위치</legend>
          <div className="flex flex-col gap-[10px] pt-[11px]">
            <MoveField id="move-h" label="가로(H):" value="0 px" />
            <MoveField id="move-v" label="세로(V):" value="103 px" />
          </div>
          <hr className="mt-[10px] mb-[10px] border-t-2 border-[#4a4a4a]" />
          <MoveField id="move-d" label="거리(D):" value="103 px" />
          <div className="mt-[10px] mb-[15px] flex items-center">
            <label htmlFor="move-a" className="w-[46px] whitespace-nowrap">
              각도(A):
            </label>
            <svg viewBox="0 0 36 36" className="size-[35px]" fill="none" stroke="#c4c4c4" strokeWidth="2">
              <circle cx="18" cy="18" r="16.500" />
              <path d="M18 18v16" />
            </svg>
            <input id="move-a" defaultValue="-90°" className={clsx(field, 'ml-[6px] w-[58px] px-1')} />
          </div>
        </fieldset>
        <fieldset className={clsx(group, 'mt-4')}>
          <legend className="px-px">옵션</legend>
          <div className="flex gap-4 pt-[10px] pb-[14px]">
            <Checkbox label="개체 변형(O)" checked disabled />
            <Checkbox label="패턴 변형(T)" disabled />
          </div>
        </fieldset>
        <div className="mt-[14px] flex">
          <Checkbox label="미리보기(P)" checked />
        </div>
        <div className="mt-[22px] flex">
          <button className={clsx(pill, 'bg-white text-[#4a4a4a]')}>복사(C)</button>
          <button className={clsx(pill, 'ml-auto border-2 border-white font-bold text-white')}>확인</button>
          <button className={clsx(pill, 'ml-[5px] border border-white text-white')}>취소</button>
        </div>
      </div>
    </div>
  )
}

/* ---------- tutorial annotations ---------- */

function Callout({ children, className }: { children: ReactNode; className?: string }) {
  return (
    <p className={clsx("rounded-xl bg-white px-[14px] pt-[2px] font-['Roboto',sans-serif] text-[36px] leading-[50px] font-bold whitespace-nowrap text-black shadow-[0_0_5px_rgba(0,0,0,0.75)]", className)}>
      {children}
    </p>
  )
}

function Pin({ n, point, className }: { n: number; point: 'down' | 'left' | 'up'; className: string }) {
  const angle = { down: 0, left: 90, up: 180 }[point]
  return (
    <svg viewBox="-48 -48 96 96" className={clsx('absolute size-24 drop-shadow-[0_0_2px_rgba(0,0,0,0.8)]', className)}>
      <path transform={`rotate(${angle})`} d="M0 41C-4 31-13 23-19 15A24.500 24.500 0 1 1 19 15C13 23 4 31 0 41z" fill="#fff" />
      <circle r="21" fill="#ff7600" />
      <text y="14" textAnchor="middle" fontSize="39" fontWeight="900" fill="#fff" fontFamily="Impact, 'Roboto Condensed', Roboto, sans-serif">
        {n}
      </text>
    </svg>
  )
}

export default function App() {
  return (
    <div className="relative flex h-screen flex-col overflow-hidden bg-[#535353] font-['Noto_Sans','Noto_Sans_CJK_KR',sans-serif]">
      <svg className="absolute size-0">
        <linearGradient id="gray">
          <stop stopColor="#2e2e2e" />
          <stop offset="1" stopColor="#d8d8d8" />
        </linearGradient>
      </svg>
      <MenuBar />
      <ControlBar />
      <div className="flex min-h-0 flex-1">
        <Toolbar />
        <DocumentArea />
        <IconStrip />
        <PanelDock />
      </div>
      <div className="h-[2px] shrink-0 bg-[#2d2d2d]">
        <div className="ml-[246px] h-full w-12 bg-[#535353]" />
      </div>

      <div className="absolute top-[129px] left-[211px] flex w-[581px] flex-col items-end gap-[11px]">
        <Callout>1. Transform Again (Ctrl+D)</Callout>
        <Callout>2. Select All</Callout>
        <Callout>3. Right Click!</Callout>
        <Callout>4. Transform-Move (Shift+Ctrl+M)</Callout>
      </div>
      <Pin n={1} point="down" className="top-[194px] left-[794px]" />

      <MoveDialog />
      <Pin n={2} point="left" className="top-[350px] left-[1288px]" />
      <Callout className="absolute top-[373px] right-px">Horizontal : 0px, Vertical : 103px</Callout>
      <Pin n={3} point="up" className="top-[675px] left-[1139px]" />
      <Callout className="absolute top-[756px] left-[1128px]">Copy</Callout>
    </div>
  )
}
